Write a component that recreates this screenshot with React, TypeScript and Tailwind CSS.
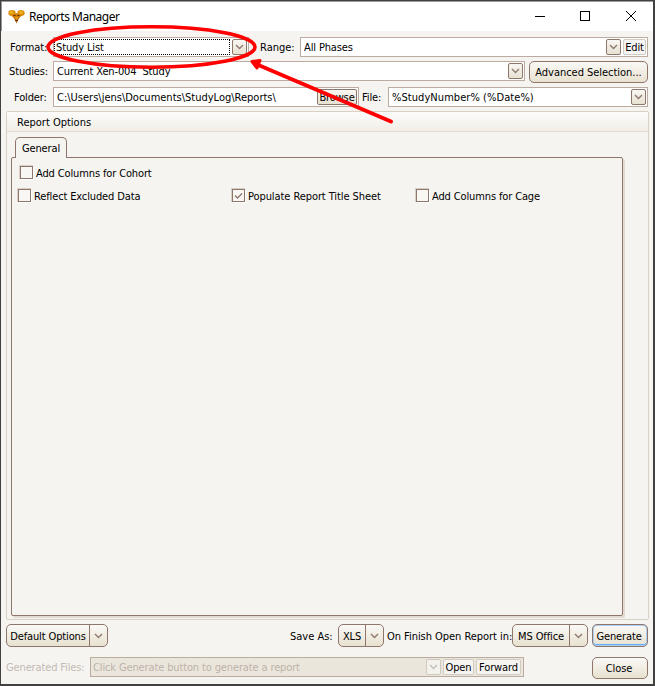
import React from "react";

type P = { className?: string; children?: React.ReactNode };

function Chevron({ color = "#8f7a6e" }: { color?: string }) {
  return (
    <svg width="9" height="6" viewBox="0 0 9 6" className="shrink-0">
      <path d="M1 1 L4.5 4.5 L8 1" fill="none" stroke={color} strokeWidth="1.4" />
    </svg>
  );
}

function DropBox({ faded = false }: { faded?: boolean }) {
  return (
    <div
      className={
        faded
          ? "flex h-4 w-[15px] shrink-0 items-center justify-center rounded-[2px] border border-[#cfc8bf] bg-[#f4f2ec]"
          : "flex h-4 w-[15px] shrink-0 items-center justify-center rounded-[2px] border border-[#8f766a] bg-linear-to-b from-[#f8f7f3] to-[#e8e1d2]"
      }
    >
      <Chevron color={faded ? "#c6beb6" : "#8f7a6e"} />
    </div>
  );
}

function Field({ className = "", children }: P) {
  return (
    <div className={"flex h-5 shrink-0 items-center border border-[#bcaba1] bg-white " + className}>{children}</div>
  );
}

function Button({ className = "", children }: P) {
  return (
    <div
      className={
        "flex shrink-0 items-center justify-center rounded-[5px] border border-[#8f766a] bg-linear-to-b from-[#faf9f6] to-[#e8e1d0] pt-[2px] " +
        className
      }
    >
      {children}
    </div>
  );
}

function Split({ className = "", children }: P) {
  return (
    <div
      className={
        "flex h-[23px] shrink-0 rounded-[5px] border border-[#8f766a] bg-linear-to-b from-[#faf9f6] to-[#e8e1d0] " +
        className
      }
    >
      <div className="flex flex-1 items-center justify-center border-r border-[#8f766a] pt-[2px]">{children}</div>
      <div className="flex w-[17px] items-center justify-center">
        <Chevron />
      </div>
    </div>
  );
}

function Check({ className = "", checked = false, children }: P & { checked?: boolean }) {
  return (
    <div className={"flex h-[14px] items-center " + className}>
      <div className="mr-[3px] h-[14px] w-[14px] shrink-0 border-t border-l border-[#d8d0c5]">
        <div className="flex h-[13px] w-[13px] items-center justify-center border border-[#8f766a] bg-[#f8f7f4] shadow-[1px_1px_0_white]">
          {checked && (
            <svg width="9" height="8" viewBox="0 0 9 8">
              <path d="M1 3.5 L3.5 6 L8 1.5" fill="none" stroke="#8f766a" strokeWidth="1.3" />
            </svg>
          )}
        </div>
      </div>
      <div className="pt-[4px]">{children}</div>
    </div>
  );
}

export default function App() {
  return (
    <div className="relative flex h-[686px] w-[655px] flex-col overflow-hidden border border-r-2 border-b-2 border-[#414141] bg-[#f6f4f0] font-['DejaVu_Sans_Condensed','DejaVu_Sans',sans-serif] text-[11px] leading-[14px] font-stretch-condensed tracking-[-0.13px] whitespace-pre text-black">
      <div className="flex h-[30px] shrink-0 items-center border-t border-l border-[#999] bg-white pl-[6px]">
        <svg width="17" height="15" viewBox="0 0 17 15">
          <path d="M4.5 6 H12.5 L8.5 14.5 Z" fill="#b5660a" />
          <ellipse cx="4" cy="4" rx="3.7" ry="3" fill="#d98b08" />
          <ellipse cx="13" cy="4" rx="3.7" ry="3" fill="#d98b08" />
          <path d="M3.5 7 L8.5 4 L13.5 7 L10 10 H7 Z" fill="#cd7d08" />
          <ellipse cx="3.5" cy="3.4" rx="2.2" ry="1.6" fill="#edae17" />
          <ellipse cx="13" cy="3.4" rx="2.2" ry="1.6" fill="#edae17" />
          <path d="M5.5 6.5 H7.5 M9.5 6.5 H11.5 M7 11.5 H10" stroke="#6b2b08" />
          <path d="M7 8 H10 L8.5 11 Z" fill="#e9a11b" />
        </svg>
        <div className="ml-[4px] flex-1 font-['Noto_Sans',sans-serif] text-[12px] font-stretch-normal tracking-[-0.5px]">Reports Manager</div>
        <svg width="106" height="14" viewBox="0 0 106 14" className="mr-[15px]" fill="none" stroke="black" shapeRendering="crispEdges">
          <path d="M3 6.5 H13" />
          <rect x="48.5" y="1.5" width="9" height="9" />
          <path d="M94 1 L104 11 M104 1 L94 11" shapeRendering="auto" />
        </svg>
      </div>

      <div className="mt-[6px] flex h-5 shrink-0 items-center">
        <div className="w-[52px] pt-[2px] pl-[9px]">Format:</div>
        <Field className="w-[196px] pr-px">
          <div className="flex h-4 flex-1 items-center border border-dotted border-black pt-[2px] pl-px">Study List</div>
          <div className="w-[2px]" />
          <DropBox />
        </Field>
        <div className="w-[51px] pt-[2px] pl-[11px] tracking-normal">Range:</div>
        <Field className="w-[348px]">
          <div className="flex-1 pt-[2px] pl-[3px]">All Phases</div>
          <DropBox />
          <div className="ml-[2px] mr-px flex h-4 w-[23px] items-center justify-center rounded-[2px] border border-[#d2cbc4] bg-[#f6f5f5] pt-[2px]">Edit</div>
        </Field>
      </div>

      <div className="mt-[4px] flex h-[22px] shrink-0 items-start">
        <div className="w-[52px] pt-[4px] pl-[8px]">Studies:</div>
        <Field className="w-[472px] pr-px">
          <div className="flex-1 pt-[2px] pl-[3px]">Current Xen-004  Study</div>
          <DropBox />
        </Field>
        <Button className="ml-[4px] h-[22px] w-[119px] tracking-[-0.03px]">Advanced Selection...</Button>
      </div>

      <div className="mt-[4px] flex h-5 shrink-0 items-center">
        <div className="w-[52px] pt-[2px] pl-[13px]">Folder:</div>
        <Field className="w-[306px]">
          <div className="flex-1 pt-[2px] pl-[3px] tracking-normal">C:\Users\jens\Documents\StudyLog\Reports\</div>
          <div className="mr-px flex h-4 w-10 items-center justify-center rounded-[2px] border border-[#8f766a] bg-linear-to-b from-[#f8f7f3] to-[#e8e1d2] pt-[2px]">Browse</div>
        </Field>
        <div className="w-[29px] pt-[2px] pl-[3px]">File:</div>
        <Field className="w-[260px] pr-px">
          <div className="flex-1 pt-[2px] pl-[3px] tracking-[0.06px]">%StudyNumber% (%Date%)</div>
          <DropBox />
        </Field>
      </div>

      <div className="mt-[4px] ml-[5px] flex h-[509px] w-[643px] shrink-0 flex-col rounded-[2px] border border-[#d8d0c2]">
        <div className="flex h-[20px] shrink-0 items-center border-b border-[#e3dccf] bg-linear-to-b from-[#fdfcfb] to-[#f1eee6] pt-[2px] pl-[10px] tracking-normal">Report Options</div>
        <div className="relative z-10 mt-[5px] ml-[8px] flex h-[21px] w-[52px] shrink-0 items-center justify-center rounded-t-[5px] border border-b-0 border-[#8f766a] bg-[#f6f4f0] pt-[2px]">General</div>
        <div className="-mt-px ml-[4px] h-[459px] w-[612px] shrink-0 rounded-[2px] border border-[#8f766a] shadow-[2px_2px_0_#e3dbd2]">
          <Check className="mt-[7px] ml-[7px]">Add Columns for Cohort</Check>
          <div className="mt-[9px] flex">
            <Check className="ml-[5px] w-[214px]">Reflect Excluded Data</Check>
            <Check checked className="w-[184px] tracking-[-0.08px]">Populate Report Title Sheet</Check>
            <Check>Add Columns for Cage</Check>
          </div>
        </div>
      </div>

      <div className="mt-[4px] ml-[5px] flex h-[23px] w-[642px] shrink-0 items-center">
        <Split className="w-[102px]">Default Options</Split>
        <div className="w-[230px] pt-[2px] pl-[182px] tracking-normal">Save As:</div>
        <Split className="w-[46px]">XLS</Split>
        <div className="w-[128px] pt-[2px] pl-[3px] tracking-[-0.04px]">On Finish Open Report in:</div>
        <Split className="w-[76px]">MS Office</Split>
        <Button className="ml-[4px] h-[23px] w-[56px] pr-[2px] shadow-[inset_0_0_0_1px_#a9cff5,inset_0_-2px_0_#65adf0]">Generate</Button>
      </div>

      <div className="mt-[10px] ml-[5px] flex h-[22px] shrink-0 items-start">
        <div className="w-[84px] pt-[4px] text-[#c2bab4]">Generated Files:</div>
        <div className="flex h-5 w-[434px] shrink-0 items-center border border-[#bcaba1] bg-[#ebe6dc] text-[#bdb3ab]">
          <div className="flex-1 pt-[2px] pl-[2px]">Click Generate button to generate a report</div>
          <DropBox faded />
          <div className="ml-[2px] flex h-4 w-[31px] items-center justify-center rounded-[2px] border border-[#d2cbc4] bg-[#f6f4f0] pt-[2px] text-black">Open</div>
          <div className="mx-[2px] flex h-4 w-[45px] items-center justify-center rounded-[2px] border border-[#d2cbc4] bg-[#f6f4f0] pt-[2px] text-black">Forward</div>
        </div>
        <Button className="ml-[68px] h-[22px] w-[56px] pr-[2px]">Close</Button>
      </div>

      <svg className="pointer-events-none absolute -top-px -left-px z-20" width="655" height="140" viewBox="0 0 655 140" fill="none" stroke="#ff0000">
        <ellipse cx="151.5" cy="47" rx="103.5" ry="20.3" strokeWidth="3.6" />
        <path d="M391 121.5 L256 64" strokeWidth="4" strokeLinecap="round" />
        <path d="M252 61.5 L260 60.5 L257 68 Z" fill="#ff0000" strokeWidth="3" strokeLinejoin="round" />
      </svg>
    </div>
  );
}
